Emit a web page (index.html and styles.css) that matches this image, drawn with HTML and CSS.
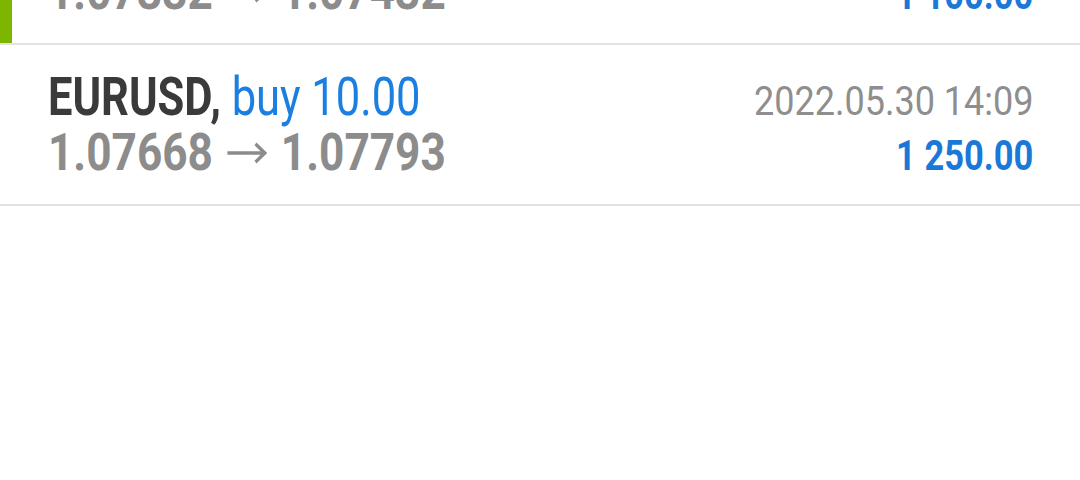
FILE: index.html
```html
<!DOCTYPE html>
<html lang="en">
<head>
  <meta charset="UTF-8">
  <meta name="viewport" content="width=device-width, initial-scale=1.0">
  <title>History</title>
  <link rel="stylesheet" href="styles.css">
</head>
<body>
  <div class="deals">
    <div class="deal profit">
      <div class="cell title"><span class="txt"><b class="sym">EURUSD,</b> <span class="side">buy 10.00</span></span></div>
      <div class="cell date"><span class="txt">2022.05.30 13:52</span></div>
      <div class="cell prices"><span class="txt">1.07332 <svg class="arrow" viewBox="0 0 54 24"><path d="M2 12H50M38 2L50 12L38 22" fill="none" stroke="currentColor" stroke-width="4"/></svg> 1.07432</span></div>
      <div class="cell amount"><span class="txt">1 100.00</span></div>
    </div>
    <div class="deal">
      <div class="cell title"><span class="txt"><b class="sym">EURUSD,</b> <span class="side">buy 10.00</span></span></div>
      <div class="cell date"><span class="txt">2022.05.30 14:09</span></div>
      <div class="cell prices"><span class="txt">1.07668 <svg class="arrow" viewBox="0 0 54 24"><path d="M2 12H50M38 2L50 12L38 22" fill="none" stroke="currentColor" stroke-width="4"/></svg> 1.07793</span></div>
      <div class="cell amount"><span class="txt">1 250.00</span></div>
    </div>
  </div>
</body>
</html>
```

FILE: styles.css
```css
body {
  margin: 0;
  padding: 0;
  background: #ffffff;
  font-family: Roboto, "Noto Sans", sans-serif;
  height: 100vh;
  overflow: hidden;
}
.deals {
  margin-top: -116px;
}
.deal {
  position: relative;
  display: grid;
  grid-template-columns: 1fr auto;
  grid-template-rows: 56px 56px;
  align-items: baseline;
  padding: 24px 47px 23px 48px;
  border-bottom: 2px solid #e2e2e2;
}
.profit::before {
  content: "";
  position: absolute;
  left: 0;
  top: 0;
  bottom: 0;
  width: 12px;
  background: #7db600;
}
.cell {
  line-height: 56px;
  white-space: nowrap;
}
.txt {
  display: inline-block;
  transform-origin: left center;
}
.title {
  font-size: 53px;
}
.title .txt {
  transform: scaleX(0.82);
}
.sym {
  font-weight: 700;
  color: #3a3a3a;
}
.side {
  color: #1a7fe0;
}
.prices {
  font-size: 52px;
  font-weight: 700;
  color: #8c8c8c;
}
.prices .txt {
  transform: scaleX(0.85);
}
.arrow {
  width: 54px;
  height: 22px;
  vertical-align: 6px;
}
.date,
.amount {
  text-align: right;
}
.date .txt,
.amount .txt {
  transform-origin: right center;
}
.date {
  font-size: 40px;
  color: #8e8e8e;
}
.date .txt {
  transform: scaleX(0.9);
}
.amount {
  font-size: 42px;
  font-weight: 700;
  color: #1a78d8;
}
.amount .txt {
  transform: scaleX(0.82);
}
```
